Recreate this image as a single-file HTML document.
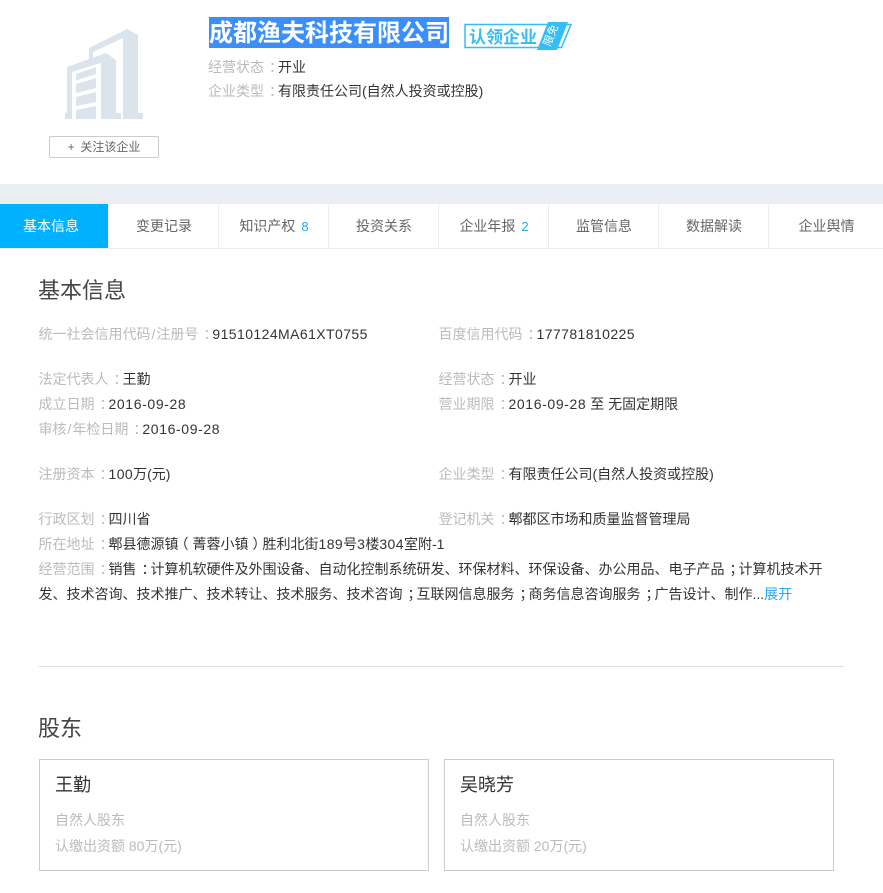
<!DOCTYPE html>
<html lang="zh"><head><meta charset="utf-8">
<style>
html,body{margin:0;padding:0;background:#fff}
body{width:883px;height:893px;position:relative;overflow:hidden;font-family:"Liberation Sans","Noto Sans CJK SC",sans-serif;font-size:14px;color:#333}
.a{position:absolute;white-space:nowrap;line-height:20px}
.l{color:#bbb}
.p{font-style:normal;position:relative;left:5px}
.q{font-style:normal;position:relative;left:-4px}
.r{font-style:normal;position:relative;left:4px}
.v{letter-spacing:.42px}
.t{letter-spacing:.62px}
.s{margin:0 1px}
.tab{position:absolute;top:204px;height:44px;line-height:44px;text-align:center;color:#666;font-size:14px;width:108px}
.d{position:absolute;top:204px;height:44px;width:1px;background:#e9eef5}
.card{position:absolute;top:759px;width:388px;height:110px;border:1px solid #ccc}
.n{font-size:18px;color:#333}
</style></head><body>
<svg class="a" style="left:60px;top:24px" width="90" height="100" viewBox="60 24 90 100">
<path fill="#dbe3ec" d="M89 48L127 29L138 35V113H143V119H123V38L93 52V58L89 60Z"/>
<path fill="#dbe3ec" d="M67 67L106 53L116 60V113H121V119H101V63L72 72V119H65V113H67Z"/>
<path fill="#dbe3ec" d="M76 74L96 67V74L76 80.500ZM76 84L96 78V88L76 93ZM76 97L96 92V102L76 106ZM76 110L96 106V119H76Z"/>
</svg>
<div class="a" style="left:49px;top:136px;width:108px;height:20px;border:1px solid #ccc;border-radius:2px;text-align:center;font-size:12px;color:#666">+&nbsp;&thinsp;关注该企业</div>
<div class="a" style="left:209px;top:17px;width:240px;height:31px;background:#3b8ffc"></div>
<div class="a" style="left:209px;top:18px;line-height:31px;font-size:24px;font-weight:bold;color:#fff">成都渔夫科技有限公司</div>
<svg class="a" style="left:464px;top:20px" width="110" height="32" viewBox="464 20 110 32">
<path d="M465 24.500H571L561.500 47.500H465Z" fill="#fff" stroke="#35bdf6" stroke-width="1.500"/>
<path d="M548 22H568L557 50H537Z" fill="#35bdf6"/>
<text x="469" y="43" font-size="17" font-weight="bold" fill="#35bdf6" font-family="Liberation Sans,Noto Sans CJK SC,sans-serif">认领企业</text>
<text x="0" y="0" font-size="11" fill="#fff" transform="translate(550 47) rotate(-68)" font-family="Liberation Sans,Noto Sans CJK SC,sans-serif">限免</text>
</svg>
<div class="a" style="left:208px;top:57px"><span class="l">经营状态<i class="p">：</i></span>开业</div>
<div class="a" style="left:208px;top:81px"><span class="l">企业类型<i class="p">：</i></span>有限责任公司(自然人投资或控股)</div>

<div style="position:absolute;left:0;top:184px;width:883px;height:20px;background:#e9eef5"></div>
<div style="position:absolute;left:0;top:248px;width:883px;height:1px;background:#e9eef5"></div>
<div class="tab" style="left:0;width:102px;padding-right:6px;background:#00b1ff;color:#fff;height:44px">基本信息</div>
<div class="tab" style="left:110px">变更记录</div>
<div class="tab" style="left:220px">知识产权 <span style="color:#1fa8f5;font-size:13px;margin-left:2px">8</span></div>
<div class="tab" style="left:330px">投资关系</div>
<div class="tab" style="left:440px">企业年报 <span style="color:#1fa8f5;font-size:13px;margin-left:2px">2</span></div>
<div class="tab" style="left:550px">监管信息</div>
<div class="tab" style="left:660px">数据解读</div>
<div class="tab" style="left:770px;width:113px">企业舆情</div>
<div class="d" style="left:218px"></div><div class="d" style="left:328px"></div><div class="d" style="left:438px"></div><div class="d" style="left:548px"></div><div class="d" style="left:658px"></div><div class="d" style="left:768px"></div>

<div class="a" style="left:38px;top:276px;font-size:22px;line-height:30px;color:#444">基本信息</div>
<div class="a" style="left:38.500px;top:324px"><span class="l">统一社会信用代码<span class="s">/</span>注册号<i class="p">：</i></span><span class="v">91510124MA61XT0755</span></div>
<div class="a" style="left:438.500px;top:324px"><span class="l">百度信用代码<i class="p">：</i></span><span class="v">177781810225</span></div>
<div class="a" style="left:38.500px;top:369px"><span class="l">法定代表人<i class="p">：</i></span>王勤</div>
<div class="a" style="left:438.500px;top:369px"><span class="l">经营状态<i class="p">：</i></span>开业</div>
<div class="a" style="left:38.500px;top:394px"><span class="l">成立日期<i class="p">：</i></span><span class="t">2016-09-28</span></div>
<div class="a" style="left:438.500px;top:394px"><span class="l">营业期限<i class="p">：</i></span><span class="t">2016-09-28</span> 至 无固定期限</div>
<div class="a" style="left:38.500px;top:419px"><span class="l">审核<span class="s">/</span>年检日期<i class="p">：</i></span><span class="t">2016-09-28</span></div>
<div class="a" style="left:38.500px;top:464px"><span class="l">注册资本<i class="p">：</i></span><span class="v">100</span>万(元)</div>
<div class="a" style="left:438.500px;top:464px"><span class="l">企业类型<i class="p">：</i></span>有限责任公司(自然人投资或控股)</div>
<div class="a" style="left:38.500px;top:509px"><span class="l">行政区划<i class="p">：</i></span>四川省</div>
<div class="a" style="left:438.500px;top:509px"><span class="l">登记机关<i class="p">：</i></span>郫都区市场和质量监督管理局</div>
<div class="a" style="left:38.500px;top:534px"><span class="l">所在地址<i class="p">：</i></span>郫县德源镇<i class="q">（</i>菁蓉小镇<i class="r">）</i>胜利北街<span class="v">189</span>号<span class="v">3</span>楼<span class="v">304</span>室附-1</div>
<div class="a" style="left:38.500px;top:559px"><span class="l">经营范围<i class="p">：</i></span>销售<i class="p">：</i>计算机软硬件及外围设备、自动化控制系统研发、环保材料、环保设备、办公用品、电子产品<i class="p">；</i>计算机技术开</div>
<div class="a" style="left:38.500px;top:584px">发、技术咨询、技术推广、技术转让、技术服务、技术咨询<i class="p">；</i>互联网信息服务<i class="p">；</i>商务信息咨询服务<i class="p">；</i>广告设计、制作...<span style="color:#1fa8f5">展开</span></div>
<div style="position:absolute;left:39px;top:666px;width:805px;height:1px;background:#ddd"></div>
<div class="a" style="left:38px;top:714px;font-size:22px;line-height:30px;color:#444">股东</div>
<div class="card" style="left:39px"></div>
<div class="card" style="left:444px"></div>
<div class="a n" style="left:55px;top:775px">王勤</div>
<div class="a l" style="left:55px;top:810px">自然人股东</div>
<div class="a l" style="left:55px;top:836px">认缴出资额 80万(元)</div>
<div class="a n" style="left:460px;top:775px">吴晓芳</div>
<div class="a l" style="left:460px;top:810px">自然人股东</div>
<div class="a l" style="left:460px;top:836px">认缴出资额 20万(元)</div>
</body></html>
